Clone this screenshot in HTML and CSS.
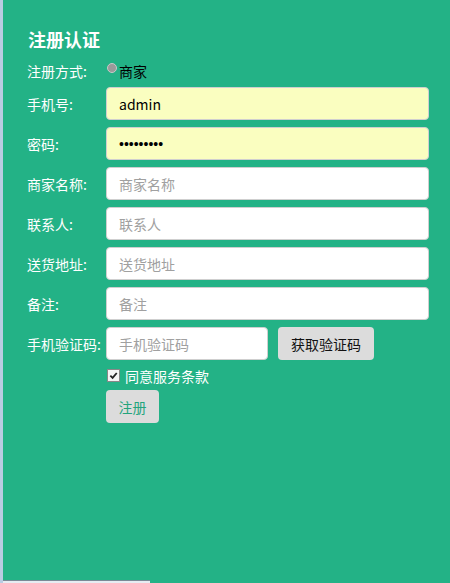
FILE: index.html
```html
<!DOCTYPE html>
<html lang="zh">
<head>
<meta charset="utf-8">
<title>注册认证</title>
<link rel="stylesheet" href="styles.css">
</head>
<body>
<div class="page">
  <form class="form">
    <h1 class="title">注册认证</h1>
    <div class="row row-radio">
      <span class="label">注册方式:</span>
      <span class="radio"></span><span class="radio-text">商家</span>
    </div>
    <div class="row">
      <span class="label">手机号:</span>
      <input class="field autofill" type="text" value="admin">
    </div>
    <div class="row">
      <span class="label">密码:</span>
      <input class="field autofill pwd" type="password" value="123456789">
    </div>
    <div class="row">
      <span class="label">商家名称:</span>
      <input class="field" type="text" placeholder="商家名称">
    </div>
    <div class="row">
      <span class="label">联系人:</span>
      <input class="field" type="text" placeholder="联系人">
    </div>
    <div class="row">
      <span class="label">送货地址:</span>
      <input class="field" type="text" placeholder="送货地址">
    </div>
    <div class="row">
      <span class="label">备注:</span>
      <input class="field" type="text" placeholder="备注">
    </div>
    <div class="row">
      <span class="label">手机验证码:</span>
      <input class="field field-code" type="text" placeholder="手机验证码">
      <button class="btn btn-code" type="button">获取验证码</button>
    </div>
    <div class="row row-check">
      <span class="label"></span>
      <span class="check"><svg viewBox="0 0 10 10" width="9" height="9"><path d="M1.5 5.2 L4 7.6 L8.6 2.2" fill="none" stroke="#222" stroke-width="2"/></svg></span>
      <span class="check-text">同意服务条款</span>
    </div>
    <div class="row row-submit">
      <span class="label"></span>
      <button class="btn btn-submit" type="button">注册</button>
    </div>
  </form>
  <div class="bottom-bar"></div>
</div>
</body>
</html>
```
FILE: styles.css
```css
html, body {
  margin: 0;
  padding: 0;
  height: 100%;
}
body {
  background: #23b286;
  font-family: "Noto Sans CJK SC", "Noto Sans", sans-serif;
  font-size: 14px;
  color: #fff;
}
.page {
  min-height: 583px;
  height: 100%;
  display: flex;
  flex-direction: column;
  border-left: 3px solid #b8cce2;
  box-sizing: border-box;
}
.form {
  flex: 1;
  padding: 25px 0 0 24px;
}
.title {
  margin: 0 0 8px 1px;
  font-size: 18px;
  line-height: 28px;
  font-weight: bold;
  color: #fff;
  font-family: "Noto Sans CJK SC", sans-serif;
}
.row {
  display: flex;
  align-items: center;
  height: 33px;
  margin-bottom: 7px;
}
.row-radio {
  height: 20px;
  margin-bottom: 6px;
  margin-top: 1px;
}
.label {
  width: 79px;
  flex: none;
  line-height: 20px;
  white-space: nowrap;
}
.radio {
  width: 8px;
  height: 8px;
  border-radius: 50%;
  background: #9a9a9a;
  border: 1px solid #c9c9c9;
  margin: -6px 2px 0 1px;
}
.radio-text {
  color: #000;
}
.field {
  width: 323px;
  height: 33px;
  box-sizing: border-box;
  border: 1px solid #cfcfcf;
  border-radius: 4px;
  background: #fff;
  padding: 0 12px;
  font-family: "Noto Sans CJK SC", "Noto Sans", sans-serif;
  font-size: 14px;
  color: #000;
  outline: none;
}
.pwd {
  font-family: "Liberation Sans", sans-serif;
  font-size: 14px;
}
.field::placeholder {
  color: #a0a0a0;
}
.autofill {
  background: #fafec0;
}
.field-code {
  width: 162px;
}
.btn {
  height: 33px;
  box-sizing: border-box;
  border: none;
  border-radius: 4px;
  background: #dcdcdc;
  font-family: "Noto Sans CJK SC", "Noto Sans", sans-serif;
  font-size: 14px;
  padding: 0 13px;
}
.btn-code {
  margin-left: 10px;
  width: 96px;
  color: #111;
}
.row-check {
  height: 18px;
  margin-top: 0;
  margin-bottom: 5px;
}
.check {
  width: 11px;
  height: 11px;
  background: #f4f4f4;
  border: 1px solid #888;
  display: flex;
  align-items: center;
  justify-content: center;
  margin: -2px 5px 0 1px;
}
.check-text {
  line-height: 18px;
}
.btn-submit {
  width: 53px;
  color: #23a47c;
  padding: 0;
}
.bottom-bar {
  height: 2px;
  width: 147px;
  border-top: 1px solid #7a8a96;
  background: #e6ecf2;
}
```
